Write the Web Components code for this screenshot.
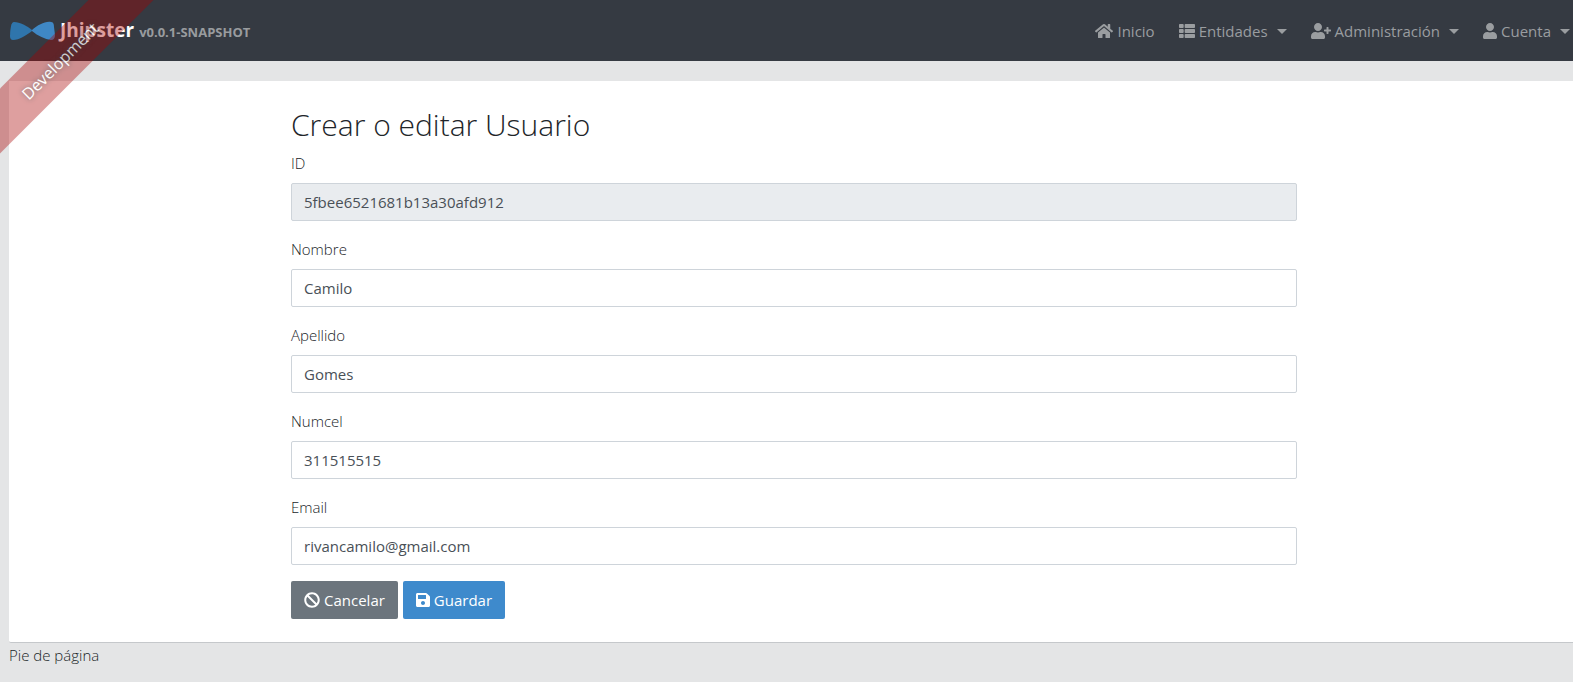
<!DOCTYPE html>
<html lang="es">
<head>
<meta charset="utf-8">
<title>Usuarios</title>
<style>
html, body { margin: 0; min-height: 100%; }
body {
  background: #e4e5e6;
  color: #212529;
  font: 300 15px/24px "Open Sans", "Noto Sans", sans-serif;
  overflow-x: hidden;
}
</style>
</head>
<body>
<app-shell></app-shell>

<script>
const ICONS = {
  home: [576, 'M280.37 148.26L96 300.11V464a16 16 0 0 0 16 16l112.06-.29a16 16 0 0 0 15.92-16V368a16 16 0 0 1 16-16h64a16 16 0 0 1 16 16v95.64a16 16 0 0 0 16 16.05L464 480a16 16 0 0 0 16-16V300L295.67 148.26a12.19 12.19 0 0 0-15.3 0zM571.6 251.47L488 182.56V44.05a12 12 0 0 0-12-12h-56a12 12 0 0 0-12 12v72.61L318.47 43a48 48 0 0 0-61 0L4.34 251.47a12 12 0 0 0-1.6 16.9l25.5 31A12 12 0 0 0 45.15 301l235.22-193.74a12.19 12.19 0 0 1 15.3 0L530.9 301a12 12 0 0 0 16.9-1.6l25.5-31a12 12 0 0 0-1.7-16.93z'],
  list: [512, 'M149.333 216v80c0 13.255-10.745 24-24 24H24c-13.255 0-24-10.745-24-24v-80c0-13.255 10.745-24 24-24h101.333c13.255 0 24 10.745 24 24zM0 376v80c0 13.255 10.745 24 24 24h101.333c13.255 0 24-10.745 24-24v-80c0-13.255-10.745-24-24-24H24c-13.255 0-24 10.745-24 24zM125.333 32H24C10.745 32 0 42.745 0 56v80c0 13.255 10.745 24 24 24h101.333c13.255 0 24-10.745 24-24V56c0-13.255-10.745-24-24-24zm80 448H488c13.255 0 24-10.745 24-24v-80c0-13.255-10.745-24-24-24H205.333c-13.255 0-24 10.745-24 24v80c0 13.255 10.745 24 24 24zm-24-424v80c0 13.255 10.745 24 24 24H488c13.255 0 24-10.745 24-24V56c0-13.255-10.745-24-24-24H205.333c-13.255 0-24 10.745-24 24zm24 264H488c13.255 0 24-10.745 24-24v-80c0-13.255-10.745-24-24-24H205.333c-13.255 0-24 10.745-24 24v80c0 13.255 10.745 24 24 24z'],
  userPlus: [640, 'M624 208h-64v-64c0-8.800-7.200-16-16-16h-32c-8.800 0-16 7.200-16 16v64h-64c-8.800 0-16 7.200-16 16v32c0 8.800 7.200 16 16 16h64v64c0 8.800 7.200 16 16 16h32c8.800 0 16-7.200 16-16v-64h64c8.800 0 16-7.200 16-16v-32c0-8.800-7.200-16-16-16zm-400 48c70.700 0 128-57.300 128-128S294.700 0 224 0 96 57.300 96 128s57.300 128 128 128zm89.600 32h-16.700c-22.200 10.200-46.900 16-72.900 16s-50.600-5.800-72.900-16h-16.700C60.200 288 0 348.200 0 422.400V464c0 26.500 21.500 48 48 48h352c26.500 0 48-21.500 48-48v-41.600c0-74.200-60.200-134.400-134.400-134.400z'],
  user: [448, 'M224 256c70.700 0 128-57.300 128-128S294.700 0 224 0 96 57.300 96 128s57.300 128 128 128zm89.600 32h-16.700c-22.200 10.200-46.900 16-72.900 16s-50.600-5.800-72.900-16h-16.700C60.200 288 0 348.200 0 422.400V464c0 26.500 21.500 48 48 48h352c26.500 0 48-21.500 48-48v-41.600c0-74.200-60.200-134.400-134.400-134.400z'],
  ban: [512, 'M256 8C119.034 8 8 119.033 8 256s111.034 248 248 248 248-111.034 248-248S392.967 8 256 8zm130.108 117.892c65.448 65.448 70 165.481 20.677 235.637L150.470 105.216c70.204-49.356 170.226-44.735 235.638 20.676zM125.892 386.108c-65.448-65.448-70-165.481-20.677-235.637L361.530 406.784c-70.203 49.356-170.226 44.736-235.638-20.676z'],
  save: [448, 'M433.941 129.941l-83.882-83.882A48 48 0 0 0 316.118 32H48C21.490 32 0 53.490 0 80v352c0 26.510 21.490 48 48 48h352c26.510 0 48-21.490 48-48V163.882a48 48 0 0 0-14.059-33.941zM224 416c-35.346 0-64-28.654-64-64 0-35.346 28.654-64 64-64s64 28.654 64 64c0 35.346-28.654 64-64 64zm96-304.520V212c0 6.627-5.373 12-12 12H76c-6.627 0-12-5.373-12-12V108c0-6.627 5.373-12 12-12h228.520c3.183 0 6.235 1.264 8.485 3.515l3.480 3.480A11.996 11.996 0 0 1 320 111.480z']
};

class UiElement extends HTMLElement {
  connectedCallback() {
    if (this.shadowRoot) return;
    this.attachShadow({ mode: 'open' }).innerHTML = this.view();
  }
}

customElements.define('ui-icon', class extends UiElement {
  view() {
    const [w, d] = ICONS[this.getAttribute('name')];
    return `<style>
      :host { display: inline-flex; flex: none; }
      svg { display: block; height: 16px; fill: currentColor; }
    </style><svg width="${w / 32}" viewBox="0 0 ${w} 512" aria-hidden="true"><path d="${d}"/></svg>`;
  }
});

customElements.define('nav-item', class extends UiElement {
  view() {
    return `<style>
      :host { display: block; }
      a { display: flex; align-items: center; gap: 4px; color: #9a9da0; font-weight: 400; text-decoration: none; white-space: nowrap; }
      a:hover { color: #c5c7c9; }
      :host([menu]) a::after { content: ""; margin-left: 5px; border: 5px solid transparent; border-top-color: currentColor; border-bottom: 0; }
    </style><a href="#"><ui-icon name="${this.getAttribute('icon')}"></ui-icon><slot></slot></a>`;
  }
});

customElements.define('app-navbar', class extends UiElement {
  view() {
    return `<style>
      :host { display: block; background: #353a42; }
      nav { display: flex; align-items: center; justify-content: space-between; min-height: 61px; padding: 0 3px 0 10px; }
      .brand { display: flex; align-items: center; gap: 5px; color: #fff; font-weight: 700; text-decoration: none; white-space: nowrap; }
      .brand svg { display: block; }
      .name { font-size: 19px; padding-bottom: 2px; }
      .version { font-size: 13px; color: #999c9f; padding-top: 2px; }
      .items { display: flex; gap: 24px; padding-top: 1px; }
    </style>
    <nav>
      <a class="brand" href="#">
        <svg width="45" height="20" viewBox="0 0 45 20" aria-hidden="true">
          <path d="M22 9C17 5 10 1 4 1Q2 1 1 5Q0 10 0 15Q0 19 3 19C9 19 17 14 22 10Z" fill="#2f75ac"/>
          <path d="M22 9C28 4 35 0 41 1Q44 1 44 6L45 14Q45 19 41 19C35 18 28 15 22 10Z" fill="#3f88c5"/>
        </svg>
        <span class="name">Jhipster</span>
        <span class="version">v0.0.1-SNAPSHOT</span>
      </a>
      <div class="items">
        <nav-item icon="home">Inicio</nav-item>
        <nav-item icon="list" menu>Entidades</nav-item>
        <nav-item icon="userPlus" menu>Administración</nav-item>
        <nav-item icon="user" menu>Cuenta</nav-item>
      </div>
    </nav>`;
  }
});

customElements.define('dev-ribbon', class extends UiElement {
  view() {
    return `<style>
      :host {
        position: absolute; top: 38px; left: -60px; z-index: 10;
        width: 240px; padding: 11px 0; text-align: center; font-size: 16px;
        background: rgba(170, 0, 0, .5); opacity: .75;
        transform: rotate(-45deg); pointer-events: none;
      }
      a { display: block; color: #fff; font-weight: 400; text-decoration: none; text-shadow: 0 0 5px #444; }
    </style><a href="#"><slot></slot></a>`;
  }
});

customElements.define('form-field', class extends UiElement {
  view() {
    const ro = this.hasAttribute('readonly') ? 'readonly' : '';
    return `<style>
      :host { display: block; margin-bottom: 16px; }
      label { display: block; margin-bottom: 8px; }
      input {
        display: block; box-sizing: border-box; width: 100%; height: 38px; padding: 6px 12px;
        border: 1px solid #ced4da; border-radius: 2px; background: #fff; color: #495057;
        font: inherit; font-weight: 400; outline: 0;
      }
      input:focus { border-color: #3e8acc; }
      input[readonly] { background: #e9ecef; }
    </style>
    <label for="field"><slot></slot></label>
    <input id="field" type="${this.getAttribute('type') || 'text'}" value="${this.getAttribute('value')}" ${ro}>`;
  }
});

customElements.define('ui-button', class extends UiElement {
  view() {
    return `<style>
      :host { display: block; }
      button {
        display: flex; align-items: center; gap: 4px; height: 38px; padding: 0 13px;
        border: 0; border-radius: 2px; background: var(--button-color, #6c757d); color: #fff;
        font: inherit; font-weight: 400; cursor: pointer;
      }
    </style><button type="button"><ui-icon name="${this.getAttribute('icon')}"></ui-icon><slot></slot></button>`;
  }
});

customElements.define('ui-card', class extends UiElement {
  view() {
    return `<style>
      :host { display: block; margin: 20px 0 0 9px; padding: 25px 2px 23px 8px; background: #fff; border-bottom: 1px solid #c5c8cb; border-bottom-left-radius: 2px; }
    </style><slot></slot>`;
  }
});

customElements.define('user-form', class extends UiElement {
  view() {
    return `<style>
      :host { display: block; width: calc(100% * 8 / 12 - 30px); margin: 0 auto; }
      h2 { margin: 0 0 7px; font-size: 30px; line-height: 38px; font-weight: 300; }
      .actions { display: flex; gap: 5px; }
      .primary { --button-color: #3e8acc; }
    </style>
    <h2>Crear o editar Usuario</h2>
    <form>
      <form-field value="5fbee6521681b13a30afd912" readonly>ID</form-field>
      <form-field value="Camilo">Nombre</form-field>
      <form-field value="Gomes">Apellido</form-field>
      <form-field value="311515515">Numcel</form-field>
      <form-field value="rivancamilo@gmail.com">Email</form-field>
      <div class="actions">
        <ui-button icon="ban">Cancelar</ui-button>
        <ui-button class="primary" icon="save">Guardar</ui-button>
      </div>
    </form>`;
  }
});

customElements.define('app-shell', class extends UiElement {
  view() {
    return `<style>
      :host { display: block; }
      footer { padding: 0 9px; }
      p { margin: 0; }
    </style>
    <dev-ribbon>Development</dev-ribbon>
    <app-navbar></app-navbar>
    <main><ui-card><user-form></user-form></ui-card></main>
    <footer><p>Pie de página</p></footer>`;
  }
});
</script>
</body>
</html>
